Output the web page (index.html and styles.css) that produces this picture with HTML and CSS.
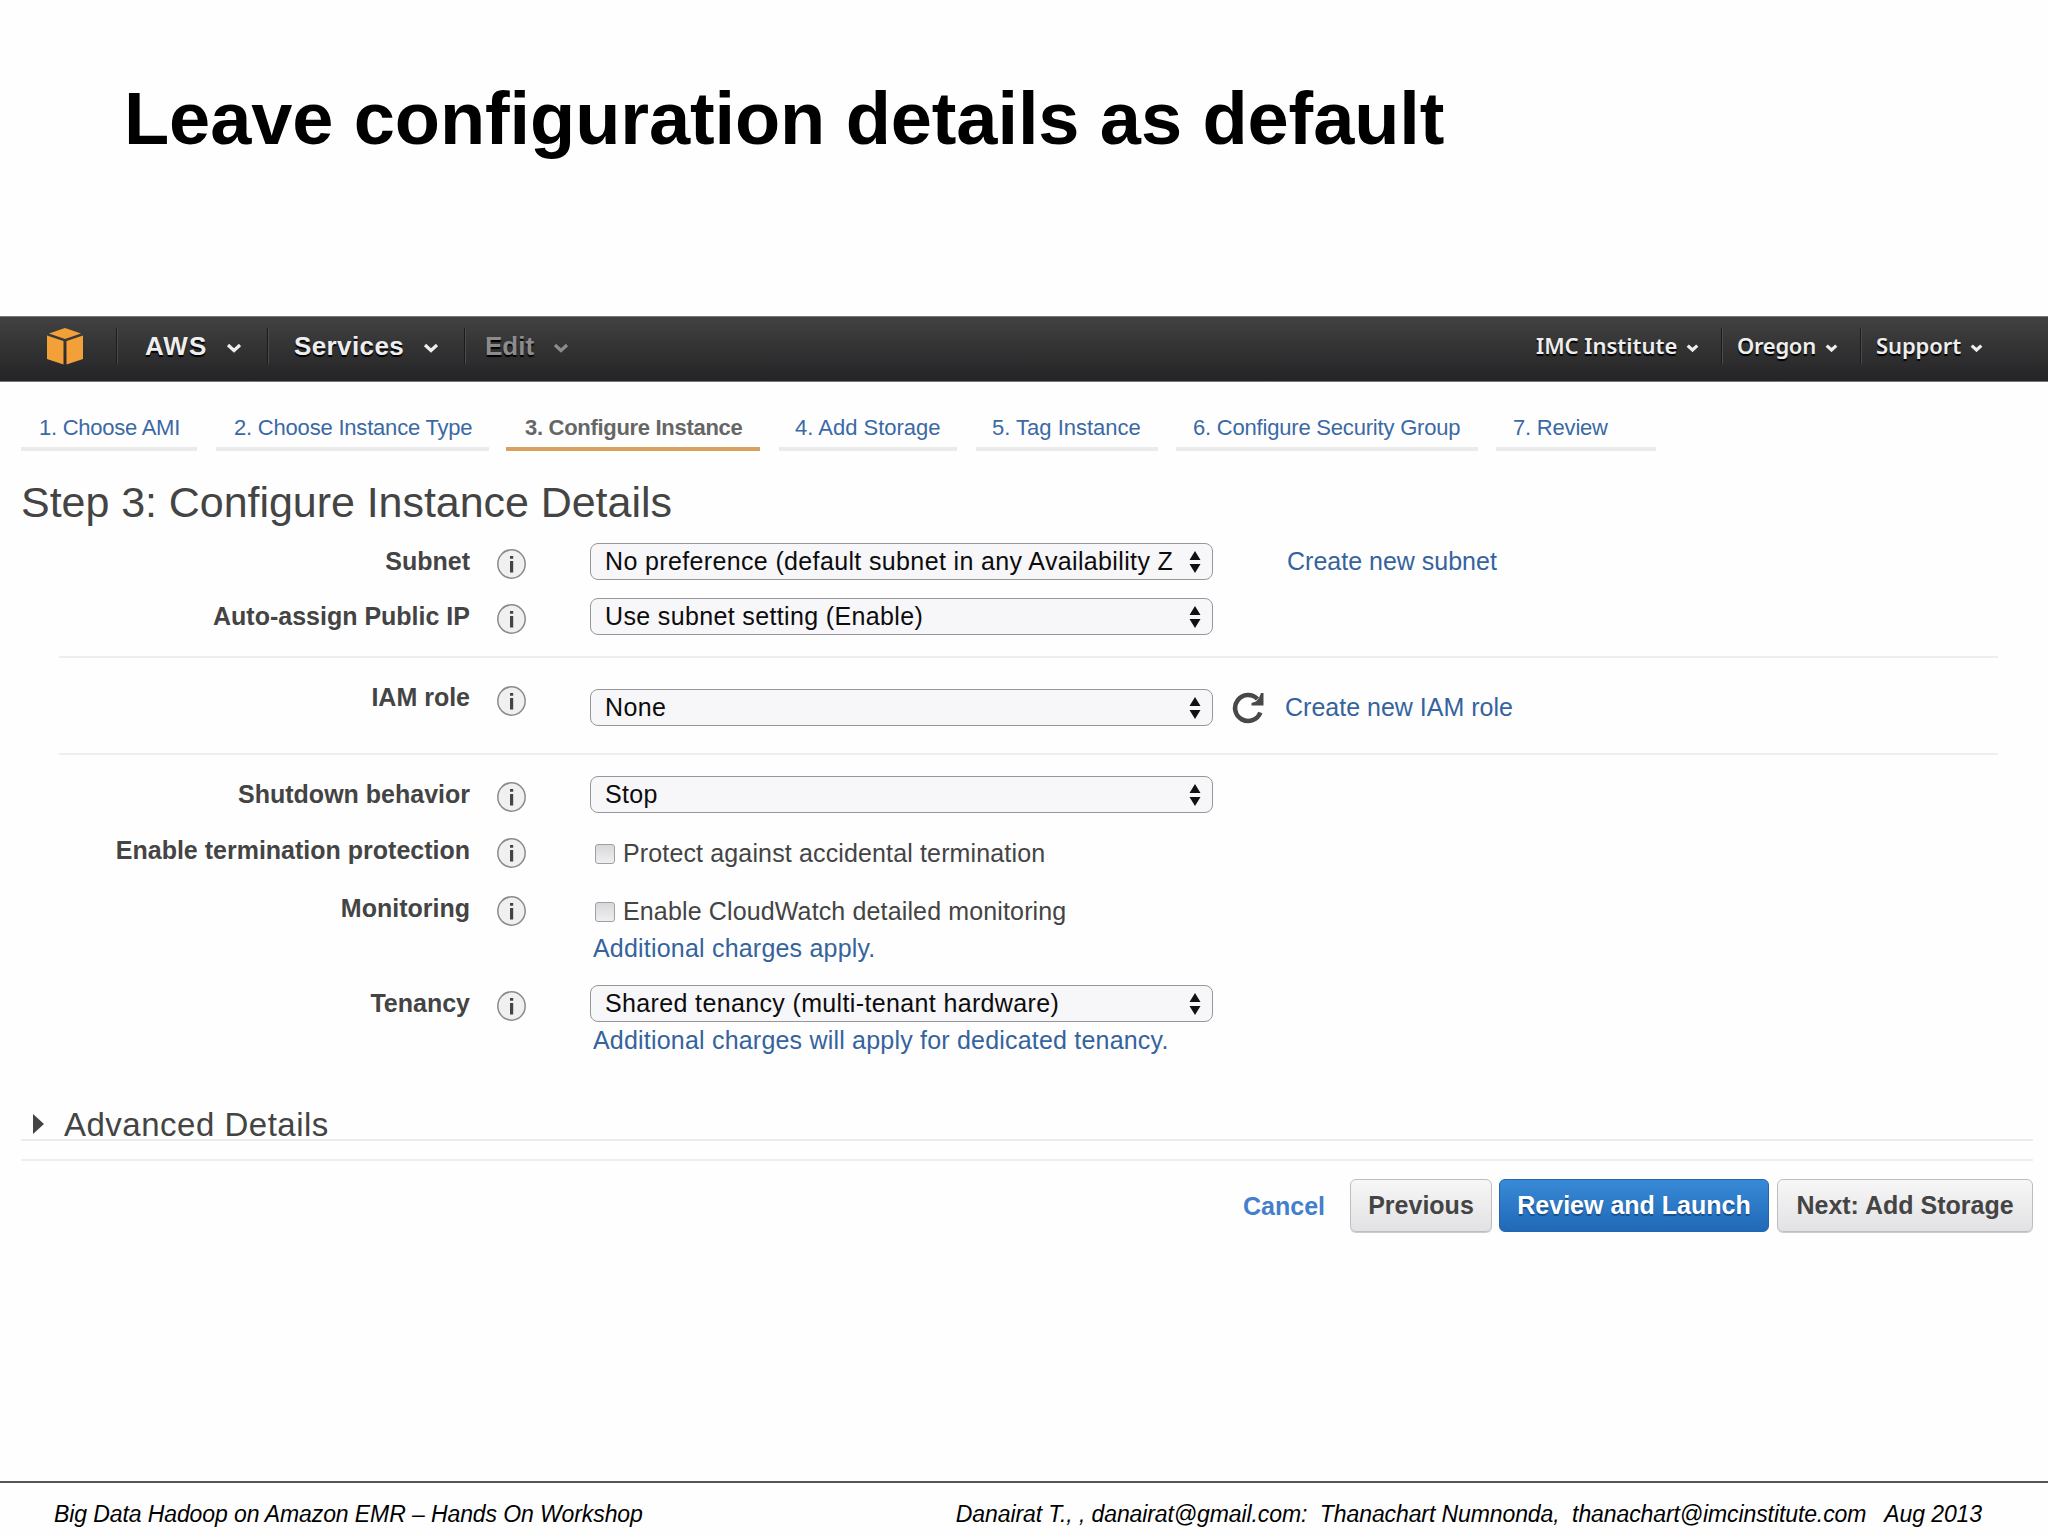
FILE: index.html
```html
<!DOCTYPE html>
<html lang="en">
<head>
<meta charset="utf-8">
<title>Leave configuration details as default</title>
<link rel="stylesheet" href="styles.css">
</head>
<body>
<main class="slide">
  <h1 class="slide-title">Leave configuration details as default</h1>

  <section class="console">
    <header class="topbar">
      <svg class="logo" viewBox="0 0 36 37"><path d="M18 0 34 5.500 18 11 2 5.500Z"/><path d="M0 7.500 16.500 13V36.500L0 31Z"/><path d="M36 7.500 19.500 13V36.500L36 31Z"/></svg>
      <nav class="menu menu-left">
        <a class="menu-item item-aws"><span>AWS</span><svg class="chevron" viewBox="0 0 16 10"><path d="M2 2 8 7.500 14 2"/></svg></a>
        <a class="menu-item item-services"><span>Services</span><svg class="chevron" viewBox="0 0 16 10"><path d="M2 2 8 7.500 14 2"/></svg></a>
        <a class="menu-item item-edit"><span>Edit</span><svg class="chevron" viewBox="0 0 16 10"><path d="M2 2 8 7.500 14 2"/></svg></a>
      </nav>
      <nav class="menu menu-right">
        <a class="menu-item item-account"><span>IMC Institute</span><svg class="chevron" viewBox="0 0 16 10"><path d="M2 2 8 7.500 14 2"/></svg></a>
        <a class="menu-item item-region"><span>Oregon</span><svg class="chevron" viewBox="0 0 16 10"><path d="M2 2 8 7.500 14 2"/></svg></a>
        <a class="menu-item item-support"><span>Support</span><svg class="chevron" viewBox="0 0 16 10"><path d="M2 2 8 7.500 14 2"/></svg></a>
      </nav>
    </header>

    <nav class="steps">
      <a class="step step-1">1. Choose AMI</a>
      <a class="step step-2">2. Choose Instance Type</a>
      <a class="step step-3 current">3. Configure Instance</a>
      <a class="step step-4">4. Add Storage</a>
      <a class="step step-5">5. Tag Instance</a>
      <a class="step step-6">6. Configure Security Group</a>
      <a class="step step-7">7. Review</a>
    </nav>

    <h2 class="page-title">Step 3: Configure Instance Details</h2>

    <form class="form">
      <div class="group">
        <div class="row row-subnet">
          <label class="label">Subnet</label><i class="info"><svg viewBox="0 0 29 30"><ellipse cx="14.500" cy="15" rx="13.700" ry="14.200"/><path d="M13 7h3.200v2.800H13zM13 12h3.200v11.500H13z"/></svg></i>
          <div class="field"><div class="select"><span class="value">No preference (default subnet in any Availability Z</span><svg class="arrows" viewBox="0 0 12 22"><path d="M6 0 11.500 9H.5ZM6 22 .5 13h11Z"/></svg></div></div>
          <a class="link aside">Create new subnet</a>
        </div>
        <div class="row row-ip">
          <label class="label">Auto-assign Public IP</label><i class="info"><svg viewBox="0 0 29 30"><ellipse cx="14.500" cy="15" rx="13.700" ry="14.200"/><path d="M13 7h3.200v2.800H13zM13 12h3.200v11.500H13z"/></svg></i>
          <div class="field"><div class="select"><span class="value">Use subnet setting (Enable)</span><svg class="arrows" viewBox="0 0 12 22"><path d="M6 0 11.500 9H.5ZM6 22 .5 13h11Z"/></svg></div></div>
        </div>
      </div>
      <div class="group">
        <div class="row row-iam">
          <label class="label">IAM role</label><i class="info"><svg viewBox="0 0 29 30"><ellipse cx="14.500" cy="15" rx="13.700" ry="14.200"/><path d="M13 7h3.200v2.800H13zM13 12h3.200v11.500H13z"/></svg></i>
          <div class="field"><div class="select"><span class="value">None</span><svg class="arrows" viewBox="0 0 12 22"><path d="M6 0 11.500 9H.5ZM6 22 .5 13h11Z"/></svg></div></div>
          <div class="aside aside-iam"><svg class="refresh" viewBox="0 0 32 32"><path class="arc" d="M28.300 20.500A13 13 0 1 1 25.500 7"/><path class="head" d="M31.500 1V13.500H19.500V11L24 9.500 27 6 29 1Z"/></svg><a class="link">Create new IAM role</a></div>
        </div>
      </div>
      <div class="group">
        <div class="row row-shutdown">
          <label class="label">Shutdown behavior</label><i class="info"><svg viewBox="0 0 29 30"><ellipse cx="14.500" cy="15" rx="13.700" ry="14.200"/><path d="M13 7h3.200v2.800H13zM13 12h3.200v11.500H13z"/></svg></i>
          <div class="field"><div class="select"><span class="value">Stop</span><svg class="arrows" viewBox="0 0 12 22"><path d="M6 0 11.500 9H.5ZM6 22 .5 13h11Z"/></svg></div></div>
        </div>
        <div class="row row-termination">
          <label class="label">Enable termination protection</label><i class="info"><svg viewBox="0 0 29 30"><ellipse cx="14.500" cy="15" rx="13.700" ry="14.200"/><path d="M13 7h3.200v2.800H13zM13 12h3.200v11.500H13z"/></svg></i>
          <div class="field"><div class="check"><i class="box"></i><span>Protect against accidental termination</span></div></div>
        </div>
        <div class="row row-monitoring">
          <label class="label">Monitoring</label><i class="info"><svg viewBox="0 0 29 30"><ellipse cx="14.500" cy="15" rx="13.700" ry="14.200"/><path d="M13 7h3.200v2.800H13zM13 12h3.200v11.500H13z"/></svg></i>
          <div class="field"><div class="check"><i class="box"></i><span>Enable CloudWatch detailed monitoring</span></div><a class="link note">Additional charges apply.</a></div>
        </div>
        <div class="row row-tenancy">
          <label class="label">Tenancy</label><i class="info"><svg viewBox="0 0 29 30"><ellipse cx="14.500" cy="15" rx="13.700" ry="14.200"/><path d="M13 7h3.200v2.800H13zM13 12h3.200v11.500H13z"/></svg></i>
          <div class="field"><div class="select"><span class="value">Shared tenancy (multi-tenant hardware)</span><svg class="arrows" viewBox="0 0 12 22"><path d="M6 0 11.500 9H.5ZM6 22 .5 13h11Z"/></svg></div><a class="link note">Additional charges will apply for dedicated tenancy.</a></div>
        </div>
      </div>
    </form>

    <div class="advanced"><svg class="caret" viewBox="0 0 11 20"><path d="M0 0 11 10 0 20Z"/></svg><span>Advanced Details</span></div>

    <div class="actions">
      <a class="cancel">Cancel</a>
      <a class="button b-prev">Previous</a>
      <a class="button primary b-review">Review and Launch</a>
      <a class="button b-next">Next: Add Storage</a>
    </div>
  </section>

  <footer class="footer">
    <span class="workshop">Big Data Hadoop on Amazon EMR – Hands On Workshop</span>
    <span class="credits">Danairat T., , danairat@gmail.com:  Thanachart Numnonda,  thanachart@imcinstitute.com   Aug 2013</span>
  </footer>
</main>
</body>
</html>
```
FILE: styles.css
```css
* { box-sizing: border-box; }
body { margin: 0; background: #fefefe; color: #444; font-family: "Liberation Sans", Arial, sans-serif; }
svg { display: block; flex: none; }
.slide { width: 2048px; height: 1536px; display: flex; flex-direction: column; overflow: hidden; }
.slide-title { margin: 0; height: 316px; padding: 75px 0 0 124px; font-size: 74px; line-height: 88px; letter-spacing: -0.1px; color: #000; white-space: nowrap; }
.console { height: 1165px; white-space: nowrap; }

/* Navigation bar */
.topbar { height: 66px; display: flex; align-items: flex-start; padding: 11px 0 0 47px; border-top: 1px solid #777; border-bottom: 1px solid #777; background: linear-gradient(#424242, #242325); }
.logo { width: 36px; height: 37px; fill: #f2a037; }
.menu { display: flex; }
.menu-left { margin-left: 33px; font-size: 26px; font-weight: bold; letter-spacing: 0.4px; }
.menu-right { margin-left: auto; font-family: "Noto Sans", sans-serif; font-size: 22px; font-weight: 600; }
.menu-item { display: flex; align-items: center; height: 36px; color: #eee; line-height: 36px; text-shadow: 0 2px 1px #000; border-left: 1px solid #1b1b1b; box-shadow: inset 1px 0 #4c4c4c; }
.menu-right .menu-item { line-height: 34px; align-items: flex-start; }
.chevron { width: 16px; height: 10px; margin-top: 4px; fill: none; stroke: currentColor; stroke-width: 3.2; }
.menu-right .chevron { width: 13px; height: 8px; stroke-width: 4; margin-top: 16px; }
.item-aws { width: 151px; padding-left: 28px; letter-spacing: 1px; }
.item-aws .chevron { margin-left: 19px; }
.item-services { width: 197px; padding-left: 26px; }
.item-services .chevron { margin-left: 19px; }
.item-edit { padding-left: 20px; color: #8c8c8c; letter-spacing: 0; }
.item-edit .chevron { margin-left: 19px; }
.item-account { border: 0; box-shadow: none; width: 185px; }
.item-account .chevron, .item-region .chevron, .item-support .chevron { margin-left: 9px; }
.item-region { width: 139px; padding-left: 15px; letter-spacing: -0.3px; }
.item-support { width: 188px; padding-left: 15px; letter-spacing: -0.1px; }

/* Wizard steps */
.steps { display: flex; padding: 27px 0 0 21px; }
.step { height: 42px; margin-right: 19px; padding-left: 18px; border-bottom: 4px solid #ecebec; color: #3b69a5; font-size: 22px; line-height: 37px; letter-spacing: -0.2px; }
.step.current { color: #666; font-weight: bold; border-color: #d9a25c; letter-spacing: -0.3px; }
.step-1 { width: 176px; letter-spacing: -0.25px; }
.step-2 { width: 273px; margin-right: 17px; }
.step-3 { width: 254px; padding-left: 19px; }
.step-4 { width: 178px; padding-left: 16px; letter-spacing: 0; }
.step-5 { width: 182px; margin-right: 18px; padding-left: 16px; letter-spacing: 0; }
.step-6 { width: 302px; margin-right: 18px; padding-left: 17px; }
.step-7 { width: 160px; padding-left: 17px; }

.page-title { margin: 0; height: 92px; padding: 26px 0 0 21px; font-size: 43px; font-weight: normal; line-height: 50px; letter-spacing: -0.05px; }

/* Instance form */
.form { padding: 0 50px 0 59px; height: 553px; font-size: 25px; line-height: 37px; }
.group { border-bottom: 2px solid #eee; }
.group:last-child { border: 0; }
.row { display: grid; grid-template-columns: 411px 29px 623px auto; align-items: start; }
.label { font-weight: bold; text-align: right; }
.info { margin: 6px 0 0 27px; width: 29px; }
.info svg { width: 29px; height: 30px; fill: #444; }
.info ellipse { fill: #f0f0f1; stroke: #8b8a8b; stroke-width: 1.5; }
.field { margin-left: 91px; width: 623px; }
.select { display: flex; align-items: center; height: 37px; padding: 0 11px 0 14px; border: 1.5px solid #99969b; border-radius: 8px; background: #f7f6f9; color: #0c0c0c; }
.value { letter-spacing: 0.36px; }
.arrows { width: 12px; height: 22px; margin-left: auto; fill: #111; }
.link { color: #35639d; }
.aside { margin-left: 165px; }
.aside-iam { display: flex; align-items: center; gap: 21px; margin: 10px 0 0 110px; }
.refresh { width: 32px; height: 32px; }
.refresh .arc { fill: none; stroke: #48484a; stroke-width: 4.6; }
.refresh .head { fill: #48484a; }
.check { display: flex; align-items: center; padding-left: 5px; gap: 8px; letter-spacing: 0.14px; }
.box { width: 20px; height: 20px; border: 1.5px solid #a09fa1; border-radius: 3px; background: linear-gradient(#d8d7d9, #efeef0); }
.note { display: block; padding-left: 3px; letter-spacing: 0.2px; }
.row-subnet { height: 55px; }
.row-ip { height: 58px; }
.row-iam { height: 95px; padding-top: 21px; }
.row-iam .field { margin-top: 10px; }
.row-iam .info { margin-top: 7px; }
.row-shutdown { height: 77px; padding-top: 21px; }
.row-termination { height: 58px; }
.row-termination .field, .row-monitoring .field { margin-top: 3px; }
.row-monitoring { height: 95px; }

.advanced { display: flex; align-items: flex-start; gap: 20px; height: 45px; margin: 0 15px 0 21px; padding: 11px 0 0 12px; border-bottom: 2px solid #ececee; font-size: 33px; line-height: 36px; letter-spacing: 0.5px; }
.caret { width: 11px; height: 20px; margin-top: 7px; fill: #444; }

.actions { display: flex; margin: 18px 15px 0 21px; padding-top: 18px; border-top: 2px solid #eeedf0; justify-content: flex-end; align-items: center; font-size: 25px; font-weight: bold; line-height: 50px; }
.cancel { margin-right: 25px; color: #447fcb; }
.button { height: 53px; border: 1.5px solid #bfbdc2; border-radius: 6px; text-align: center; background: linear-gradient(#f7f7f8, #e2e1e3); box-shadow: 0 1px #ccc; }
.primary { color: #fff; border-color: #2565ab; background: linear-gradient(#398ad6, #2069b8); text-shadow: 0 2px 1px #174f8c; box-shadow: none; }
.b-prev { width: 142px; margin-right: 7px; }
.b-review { width: 270px; margin-right: 8px; }
.b-next { width: 256px; }

.footer { flex: 1; display: flex; justify-content: space-between; padding: 17px 66px 0 54px; border-top: 2px solid #555; color: #000; font-size: 23px; font-style: italic; line-height: 28px; letter-spacing: -0.1px; white-space: pre; }
```
